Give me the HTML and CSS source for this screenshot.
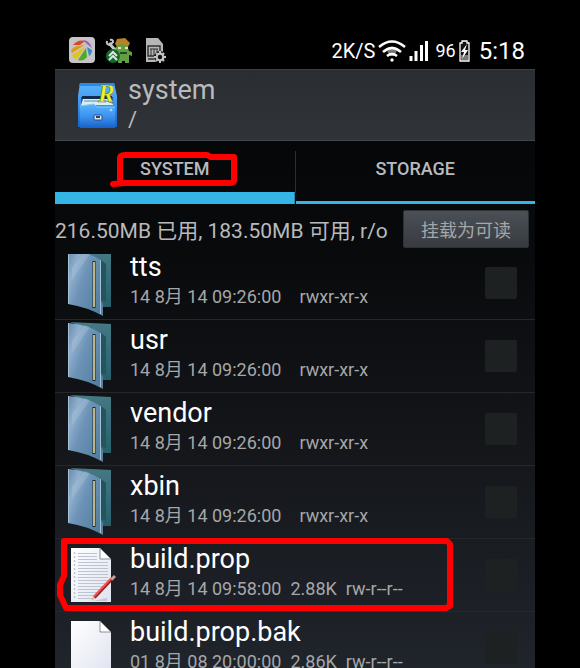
FILE: index.html
```html
<!DOCTYPE html>
<html lang="zh-CN">

<head>
    <meta charset="UTF-8">
    <meta name="viewport" content="width=device-width, initial-scale=1.0">
    <title>system</title>
    <link rel="stylesheet" href="styles.css">
</head>

<body>
    <!-- shared icons -->
    <svg class="defs" width="0" height="0" aria-hidden="true">
        <defs>
            <linearGradient id="front" x1="0" y1="0" x2="1" y2="0.7">
                <stop offset="0" stop-color="#6689ac" />
                <stop offset="0.25" stop-color="#91b0ce" />
                <stop offset="0.5" stop-color="#6d93b7" />
                <stop offset="1" stop-color="#547f9e" />
            </linearGradient>
            <linearGradient id="back" x1="0" y1="0" x2="0" y2="1">
                <stop offset="0" stop-color="#457985" />
                <stop offset="1" stop-color="#27606a" />
            </linearGradient>
            <linearGradient id="paper" x1="0" y1="0" x2="1" y2="1">
                <stop offset="0" stop-color="#ffffff" />
                <stop offset="1" stop-color="#dfe3ef" />
            </linearGradient>
            <linearGradient id="cabinet" x1="0" y1="0" x2="0" y2="1">
                <stop offset="0" stop-color="#5bb4fa" />
                <stop offset="0.5" stop-color="#3d94ef" />
                <stop offset="1" stop-color="#1762c8" />
            </linearGradient>
        </defs>
        <symbol id="folder" viewBox="0 0 48 70">
            <path d="M2 1 L43 3 V59 H33 V12 Z" fill="url(#back)" />
            <path d="M33 12 L38 16 V54 L33 52 Z" fill="#24555f" />
            <path d="M0 2 Q18 3 33 12 V53 L35 56 V68 Q19 59 0 56 Z" fill="url(#front)" />
            <path d="M4 20 L17 4 L22 6 L4 32 Z" fill="#b4cadf" opacity="0.3" />
            <path d="M0.5 2 V56 M32.5 12 V66" stroke="#a5c1d7" stroke-width="1" fill="none" />
            <path d="M26 13 V60" stroke="#182b35" stroke-width="3" />
            <path d="M26 14 V59" stroke="#ead89b" stroke-width="1.6" />
        </symbol>
        <symbol id="page" viewBox="0 0 48 70">
            <path d="M3 8 H32 L43 19 V62 H3 Z" fill="url(#paper)" />
            <path d="M32 8 V19 H43 Z" fill="#fff" stroke="#6f747e" stroke-width="0.8" />
        </symbol>
        <symbol id="script" viewBox="0 0 48 70">
            <use href="#page" width="48" height="70" />
            <path d="M10 13.5 H29 M10 16.5 H29 M10 19.5 H29 M10 22.5 H40 M10 25.5 H40 M10 28.5 H40 M10 31.5 H40 M10 34.5 H40 M10 37.5 H40 M10 40.5 H40 M10 43.5 H38 M10 46.5 H36 M10 49.5 H33 M10 52.5 H30 M10 55.5 H27 M10 58.5 H24" stroke="#bcc3d3" stroke-width="1" />
            <path d="M6.5 12 V60" stroke="#bcc3d3" stroke-width="1.4" stroke-dasharray="2 2" />
            <path d="M25 61 L39 58 V61 Z" fill="#b0b3bf" opacity="0.6" />
            <path d="M23 61 L25 56 L28 58 Z" fill="#e4bd91" />
            <path d="M26.5 57.5 L44.5 38.5" stroke="#8d2023" stroke-width="3" />
            <path d="M26 56.5 L43.5 38" stroke="#ee5450" stroke-width="2" />
            <path d="M43.5 39.5 L47 36" stroke="#c7a09c" stroke-width="3" />
        </symbol>
    </svg>

    <main class="phone">
        <div class="status-bar">
            <div class="notices">
                <svg class="notice" viewBox="0 0 28 28">
                    <rect x="1" y="1" width="26" height="26" rx="4" fill="#c5c5c7" />
                    <path d="M5 9 Q10 3 17 5 L12 9 Z" fill="#d94a24" />
                    <path d="M3 15 Q5 10 12 10 L18 8 L4 17 Z" fill="#dd9b16" />
                    <path d="M4 19 L18 10 L9 23 Q5 23 4 19 Z" fill="#dfc51f" />
                    <path d="M18 12 L19 21 Q15 26 10 24 Z" fill="#55a72b" />
                    <path d="M19 11 L24 14 Q24 18 21 20 Z" fill="#368cc5" />
                    <path d="M15 4 Q21 4 24 12 L19 8 Z" fill="#9c5ac4" />
                </svg>
                <svg class="notice" viewBox="0 0 28 28">
                    <path d="M10 8 L12 3 L20 2 L25 7 L23 11 L13 12 Z" fill="#b88325" />
                    <path d="M10 12 Q17 4 23 12 L24 15 L27 16 V20 L24 19 V27 H20 V25 H17 V27 H13 V24 H10 Z" fill="#629f43" />
                    <path d="M13 12 h3 M20 12 h3" stroke="#dce5c4" stroke-width="2" />
                    <path d="M15 17 H22" stroke="#254d20" stroke-width="2" />
                    <path d="M4 7 L10 14" stroke="#c5c8ca" stroke-width="3" />
                    <path d="M2 5 Q1 9 5 9 L8 6 Q8 3 5 4" fill="none" stroke="#c5c8ca" stroke-width="2" />
                    <circle cx="8" cy="20" r="7" fill="#16672b" />
                    <path d="M4 20 L8 16 L12 20 M4 24 L8 20 L12 24" fill="none" stroke="#dce8dc" stroke-width="2" />
                </svg>
                <svg class="notice" viewBox="0 0 28 28">
                    <path d="M4 2 H16 L21 8 V26 H4 Z" fill="#b6b6b6" />
                    <path d="M6 10 H18 V20 H6 Z M6 23 H12" fill="none" stroke="#333" stroke-width="1.5" />
                    <path d="M9 13 V20 M12 13 V20 M15 13 V17 M8 13 H16" stroke="#333" />
                    <circle cx="18" cy="21" r="6" fill="#111" />
                    <circle cx="18" cy="21" r="3.3" fill="none" stroke="#c3c3c3" stroke-width="2.2" />
                    <path d="M18 15 v3 M18 24 v3 M12 21 h3 M21 21 h3 M14 17 l2 2 M20 23 l2 2 M14 25 l2 -2 M20 19 l2 -2" stroke="#c3c3c3" stroke-width="2" />
                </svg>
            </div>
            <div class="signals">
                <span class="speed">2K/S</span>
                <svg class="wifi" viewBox="0 0 28 24" fill="none" stroke="#fff" stroke-width="2.6">
                    <path d="M8 10 Q14 5 20 10 L16 17 H12 Z" fill="#777" stroke="none" />
                    <path d="M1 8 Q14 -3 27 8 M5 13 Q14 5 23 13 M9 17 Q14 13 19 17" />
                    <circle cx="14" cy="21" r="1.7" fill="#fff" stroke="none" />
                </svg>
                <svg class="bars" viewBox="0 0 19 22">
                    <path d="M2 16 V21 M7 11 V21 M12.5 5 V21 M17.5 1 V21" stroke="#fff" stroke-width="3" />
                </svg>
                <span class="battery-level">96</span>
                <svg class="battery" viewBox="0 0 11 22">
                    <path d="M3 3 V1 H8 V3 H10 V21 H1 V3 Z" fill="#111" stroke="#fff" stroke-width="1.3" />
                    <path d="M2 15 H9 V20 H2 Z" fill="#777" />
                    <path d="M8 4 L2 12 H5 L3 19 L9 10 H6 Z" fill="#fff" />
                </svg>
                <time class="clock">5:18</time>
            </div>
        </div>

        <header class="header">
            <svg class="app-icon" viewBox="0 0 42 52">
                <path d="M3 4 H37 L40 17 V48 H1 V17 Z" fill="url(#cabinet)" />
                <path d="M3 4 H37 L38 7 H2 Z" fill="#2889e6" />
                <path d="M4 18 H36 V25 H4 Z" fill="#245896" />
                <path d="M5 17 H35 V20 H5 Z" fill="#102c50" />
                <path d="M6 20 H34 L36 26 H4 Z" fill="#dcecf4" />
                <path d="M7 22 H30 L35 24" stroke="#5c8dac" fill="none" />
                <path d="M3 27 L17 25 L20 28 H38 V49 H3 Z" fill="url(#cabinet)" />
                <path d="M3 27 L17 25 L20 28 H38" stroke="#80ccff" fill="none" />
                <rect x="17" y="36" width="8" height="5" rx="1" fill="#e8e3d5" stroke="#184e96" />
                <path d="M19 38 H23" stroke="#303b74" stroke-width="2" />
                <circle cx="34" cy="31" r="1.3" fill="#b1def7" />
                <text class="app-letter" x="21" y="23">R</text>
            </svg>
            <div class="location">
                <h1>system</h1>
                <p>/</p>
            </div>
        </header>

        <nav class="tabs">
            <button class="tab active" type="button">SYSTEM
                <svg class="mark mark-tab" viewBox="0 0 128 36">
                    <path d="M10 6 Q10 3 15 3 H97 L101 5 H124 V29 Q124 31 118 31 H10 Z M3 32 L15 31" />
                </svg>
            </button>
            <button class="tab" type="button">STORAGE</button>
        </nav>

        <section class="storage">
            <p>216.50MB 已用, 183.50MB 可用, r/o</p>
            <button class="mount" type="button">挂载为可读</button>
        </section>

        <div class="files">
            <ul class="file-list">
                <li class="file">
                    <svg class="file-icon"><use href="#folder" /></svg>
                    <label class="file-text" for="tts">
                        <span class="name">tts</span>
                        <span class="detail"><span>14 8月 14 09:26:00</span><span></span><span>rwxr-xr-x</span></span>
                    </label>
                    <input class="check" type="checkbox" id="tts">
                </li>
                <li class="file">
                    <svg class="file-icon"><use href="#folder" /></svg>
                    <label class="file-text" for="usr">
                        <span class="name">usr</span>
                        <span class="detail"><span>14 8月 14 09:26:00</span><span></span><span>rwxr-xr-x</span></span>
                    </label>
                    <input class="check" type="checkbox" id="usr">
                </li>
                <li class="file">
                    <svg class="file-icon"><use href="#folder" /></svg>
                    <label class="file-text" for="vendor">
                        <span class="name">vendor</span>
                        <span class="detail"><span>14 8月 14 09:26:00</span><span></span><span>rwxr-xr-x</span></span>
                    </label>
                    <input class="check" type="checkbox" id="vendor">
                </li>
                <li class="file">
                    <svg class="file-icon"><use href="#folder" /></svg>
                    <label class="file-text" for="xbin">
                        <span class="name">xbin</span>
                        <span class="detail"><span>14 8月 14 09:26:00</span><span></span><span>rwxr-xr-x</span></span>
                    </label>
                    <input class="check" type="checkbox" id="xbin">
                </li>
                <li class="file">
                    <svg class="file-icon"><use href="#script" /></svg>
                    <label class="file-text" for="build">
                        <span class="name">build.prop</span>
                        <span class="detail"><span>14 8月 14 09:58:00</span><span>2.88K</span><span>rw-r--r--</span></span>
                    </label>
                    <input class="check" type="checkbox" id="build">
                    <svg class="mark mark-file" viewBox="0 0 398 74">
                        <path d="M8 4 H391 L394 7 V69 L390 71 H10 Q7 64 4 58 V48 L8 39 Z" />
                    </svg>
                </li>
                <li class="file">
                    <svg class="file-icon"><use href="#page" /></svg>
                    <label class="file-text" for="bak">
                        <span class="name">build.prop.bak</span>
                        <span class="detail"><span>01 8月 08 20:00:00</span><span>2.86K</span><span>rw-r--r--</span></span>
                    </label>
                    <input class="check" type="checkbox" id="bak">
                </li>
            </ul>
        </div>
    </main>
</body>

</html>
```
FILE: styles.css
```css
* {
    box-sizing: border-box;
}

body {
    margin: 0;
    padding: 30px 45px 0 55px;
    height: 100vh;
    overflow: hidden;
    background-color: #000;
    color: #b9babb;
    font-family: Roboto, "Noto Sans CJK SC", sans-serif;
}

h1,
p,
ul {
    margin: 0;
    padding: 0;
    font-weight: normal;
}

button {
    font-family: inherit;
    color: inherit;
    border: none;
    padding: 0;
    cursor: pointer;
}

svg {
    display: block;
    flex-shrink: 0;
}

.defs {
    position: absolute;
}

.phone {
    display: flex;
    flex-direction: column;
    height: 100%;
    background: linear-gradient(#050608 15%, #090a0c 35%, #14161a 65%, #20242b);
}

/* status bar */
.status-bar {
    display: flex;
    justify-content: space-between;
    align-items: center;
    height: 39px;
    flex-shrink: 0;
    padding: 0 10px 0 13px;
    background-color: #000;
    color: #fff;
}

.notices {
    display: flex;
    gap: 9px;
}

.notice {
    width: 28px;
    height: 28px;
}

.signals {
    display: flex;
    align-items: center;
    gap: 3px;
    padding-top: 2px;
}

.speed {
    font-size: 20px;
}

.wifi {
    width: 28px;
    height: 24px;
}

.bars {
    width: 19px;
    height: 22px;
}

.battery-level {
    font-size: 18px;
    margin-left: 4px;
}

.battery {
    width: 11px;
    height: 22px;
}

.clock {
    font-size: 24px;
    margin-left: 6px;
}

/* title */
.header {
    display: flex;
    align-items: center;
    gap: 9px;
    height: 72px;
    flex-shrink: 0;
    padding-left: 22px;
    background: linear-gradient(#2a2e32, #303438);
    border-top: 1px solid #3c3f42;
    border-bottom: 1px solid #43474a;
}

.app-icon {
    width: 42px;
    height: 52px;
    overflow: visible;
}

.app-letter {
    font: italic bold 25px "Liberation Serif", serif;
    fill: #f4f02b;
    stroke: #52742c;
    stroke-width: 0.5px;
}

.location h1 {
    font-size: 27px;
    line-height: 30px;
}

.location p {
    font-size: 22px;
    line-height: 30px;
}

/* tabs */
.tabs {
    display: flex;
    height: 63px;
    flex-shrink: 0;
}

.tab {
    position: relative;
    flex: 1;
    padding-bottom: 8px;
    background: linear-gradient(#34b5e5, #34b5e5) bottom / 100% 3px no-repeat;
    font-size: 18px;
    font-weight: 500;
}

.tab.active {
    background: linear-gradient(#34b5e5, #34b5e5) bottom / 100% 12px no-repeat;
}

.tab + .tab {
    border-left: 1px solid;
    border-image: linear-gradient(transparent 11px, #2b2e30 11px, #2b2e30 51px, transparent 51px) 1;
}

/* red pen marks */
.mark {
    position: absolute;
    fill: none;
    stroke: #f00;
    stroke-width: 6px;
    stroke-linejoin: round;
    stroke-linecap: round;
    pointer-events: none;
}

.mark-tab {
    left: 55px;
    top: 11px;
    width: 128px;
    height: 36px;
}

.mark-file {
    left: 1px;
    top: -2px;
    width: 398px;
    height: 74px;
}

/* mount info */
.storage {
    display: flex;
    justify-content: space-between;
    align-items: center;
    height: 50px;
    flex-shrink: 0;
    padding: 0 6px 0 0;
    font-size: 21px;
    white-space: nowrap;
}

.mount {
    width: 126px;
    height: 38px;
    border: 1px solid #2e3236;
    border-radius: 2px;
    background: linear-gradient(#4b5056, #373b40);
    color: #a4a7a9;
    font-size: 18px;
}

/* files, scrolled a little past the first row's top */
.files {
    flex: 1;
    min-height: 0;
    overflow: hidden;
}

.file-list {
    list-style: none;
    margin-top: -7px;
}

.file {
    position: relative;
    display: flex;
    align-items: center;
    height: 73px;
    padding: 0 18px 0 13px;
    border-bottom: 1px solid #25282a;
}

.file-icon {
    width: 48px;
    height: 70px;
}

.file-text {
    flex: 1;
    padding: 0 0 5px 14px;
}

.name {
    display: block;
    color: #fff;
    font-size: 27px;
    line-height: 32px;
}

.detail {
    display: flex;
    gap: 9px;
    font-size: 18px;
    line-height: 28px;
    color: #a5a7a9;
}

.check {
    appearance: none;
    width: 32px;
    height: 32px;
    margin: 0;
    border-radius: 2px;
    background-color: #1e2122;
}

.check:checked {
    background-color: #34b5e5;
}
```
